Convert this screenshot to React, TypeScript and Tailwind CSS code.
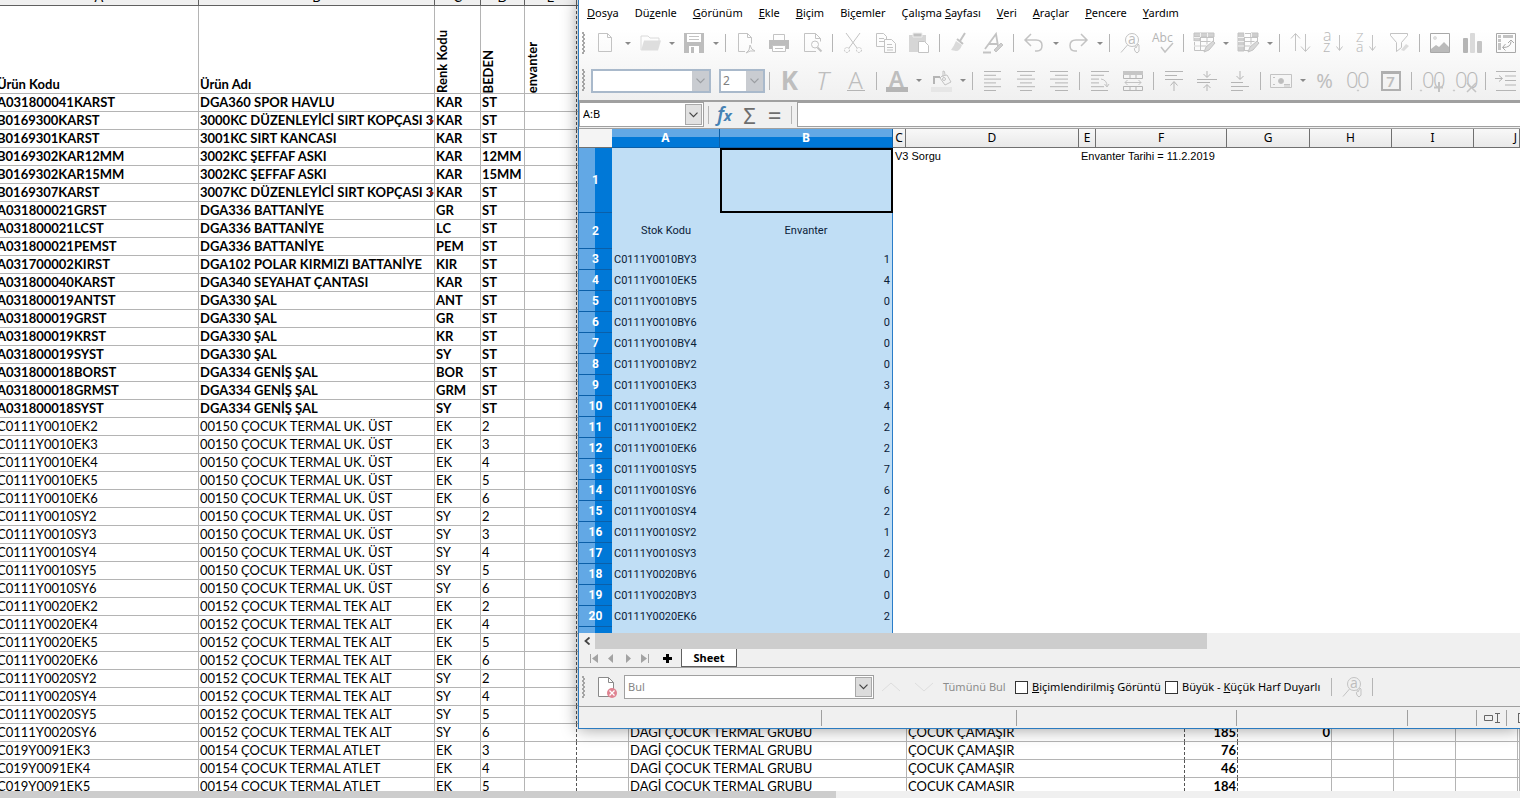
import React from 'react';
import type { ReactNode } from 'react';

type StockRow = [code: string, name: string, color: string, size: string];

const boldRows: StockRow[] = [
  ['A031800041KARST', 'DGA360 SPOR HAVLU', 'KAR', 'ST'],
  ['B0169300KARST', '3000KC DÜZENLEYİCİ SIRT KOPÇASI 3', 'KAR', 'ST'],
  ['B0169301KARST', '3001KC SIRT KANCASI', 'KAR', 'ST'],
  ['B0169302KAR12MM', '3002KC ŞEFFAF ASKI', 'KAR', '12MM'],
  ['B0169302KAR15MM', '3002KC ŞEFFAF ASKI', 'KAR', '15MM'],
  ['B0169307KARST', '3007KC DÜZENLEYİCİ SIRT KOPÇASI 3', 'KAR', 'ST'],
  ['A031800021GRST', 'DGA336 BATTANİYE', 'GR', 'ST'],
  ['A031800021LCST', 'DGA336 BATTANİYE', 'LC', 'ST'],
  ['A031800021PEMST', 'DGA336 BATTANİYE', 'PEM', 'ST'],
  ['A031700002KIRST', 'DGA102 POLAR KIRMIZI BATTANİYE', 'KIR', 'ST'],
  ['A031800040KARST', 'DGA340 SEYAHAT ÇANTASI', 'KAR', 'ST'],
  ['A031800019ANTST', 'DGA330 ŞAL', 'ANT', 'ST'],
  ['A031800019GRST', 'DGA330 ŞAL', 'GR', 'ST'],
  ['A031800019KRST', 'DGA330 ŞAL', 'KR', 'ST'],
  ['A031800019SYST', 'DGA330 ŞAL', 'SY', 'ST'],
  ['A031800018BORST', 'DGA334 GENİŞ ŞAL', 'BOR', 'ST'],
  ['A031800018GRMST', 'DGA334 GENİŞ ŞAL', 'GRM', 'ST'],
  ['A031800018SYST', 'DGA334 GENİŞ ŞAL', 'SY', 'ST'],
];

const normalRows: StockRow[] = [
  ['C0111Y0010EK2', '00150 ÇOCUK TERMAL UK. ÜST', 'EK', '2'],
  ['C0111Y0010EK3', '00150 ÇOCUK TERMAL UK. ÜST', 'EK', '3'],
  ['C0111Y0010EK4', '00150 ÇOCUK TERMAL UK. ÜST', 'EK', '4'],
  ['C0111Y0010EK5', '00150 ÇOCUK TERMAL UK. ÜST', 'EK', '5'],
  ['C0111Y0010EK6', '00150 ÇOCUK TERMAL UK. ÜST', 'EK', '6'],
  ['C0111Y0010SY2', '00150 ÇOCUK TERMAL UK. ÜST', 'SY', '2'],
  ['C0111Y0010SY3', '00150 ÇOCUK TERMAL UK. ÜST', 'SY', '3'],
  ['C0111Y0010SY4', '00150 ÇOCUK TERMAL UK. ÜST', 'SY', '4'],
  ['C0111Y0010SY5', '00150 ÇOCUK TERMAL UK. ÜST', 'SY', '5'],
  ['C0111Y0010SY6', '00150 ÇOCUK TERMAL UK. ÜST', 'SY', '6'],
  ['C0111Y0020EK2', '00152 ÇOCUK TERMAL TEK ALT', 'EK', '2'],
  ['C0111Y0020EK4', '00152 ÇOCUK TERMAL TEK ALT', 'EK', '4'],
  ['C0111Y0020EK5', '00152 ÇOCUK TERMAL TEK ALT', 'EK', '5'],
  ['C0111Y0020EK6', '00152 ÇOCUK TERMAL TEK ALT', 'EK', '6'],
  ['C0111Y0020SY2', '00152 ÇOCUK TERMAL TEK ALT', 'SY', '2'],
  ['C0111Y0020SY4', '00152 ÇOCUK TERMAL TEK ALT', 'SY', '4'],
  ['C0111Y0020SY5', '00152 ÇOCUK TERMAL TEK ALT', 'SY', '5'],
  ['C0111Y0020SY6', '00152 ÇOCUK TERMAL TEK ALT', 'SY', '6'],
  ['C019Y0091EK3', '00154 ÇOCUK TERMAL ATLET', 'EK', '3'],
  ['C019Y0091EK4', '00154 ÇOCUK TERMAL ATLET', 'EK', '4'],
  ['C019Y0091EK5', '00154 ÇOCUK TERMAL ATLET', 'EK', '5'],
];

// group, type, amount, total — only for the rows below the Calc window
const extras: Record<string, string[]> = {
  C0111Y0020SY6: ['DAGİ ÇOCUK TERMAL GRUBU', 'ÇOCUK ÇAMAŞIR', '185', '0'],
  C019Y0091EK3: ['DAGİ ÇOCUK TERMAL GRUBU', 'ÇOCUK ÇAMAŞIR', '76', ''],
  C019Y0091EK4: ['DAGİ ÇOCUK TERMAL GRUBU', 'ÇOCUK ÇAMAŞIR', '46', ''],
  C019Y0091EK5: ['DAGİ ÇOCUK TERMAL GRUBU', 'ÇOCUK ÇAMAŞIR', '184', ''],
};

const calcRows: [string, string][] = [
  ['C0111Y0010BY3', '1'],
  ['C0111Y0010EK5', '4'],
  ['C0111Y0010BY5', '0'],
  ['C0111Y0010BY6', '0'],
  ['C0111Y0010BY4', '0'],
  ['C0111Y0010BY2', '0'],
  ['C0111Y0010EK3', '3'],
  ['C0111Y0010EK4', '4'],
  ['C0111Y0010EK2', '2'],
  ['C0111Y0010EK6', '2'],
  ['C0111Y0010SY5', '7'],
  ['C0111Y0010SY6', '6'],
  ['C0111Y0010SY4', '2'],
  ['C0111Y0010SY2', '1'],
  ['C0111Y0010SY3', '2'],
  ['C0111Y0020BY6', '0'],
  ['C0111Y0020BY3', '0'],
  ['C0111Y0020EK6', '2'],
];

/* ---------- background sheet ---------- */

const cell = 'h-[18px] border-b border-r border-[#b4b4b4] p-0 pl-px leading-[17px] whitespace-nowrap';
const dashed = 'h-[18px] border-b border-r border-b-[#b4b4b4] border-r-[#555] [border-right-style:dashed] p-0 leading-[17px] whitespace-nowrap';

const SheetRow = ({ row, bold }: { row: StockRow; bold?: boolean }) => {
  const [group, type, amount, total] = extras[row[0]] ?? ['', '', '', ''];
  const cut = row[1].includes('KOPÇASI');

  return (
    <tr className={bold ? 'font-bold' : ''}>
      <td className={`${cell} -indent-1`}>{row[0]}</td>
      <td className={`${cell} relative`}>
        {row[1]}
        {cut && (
          <svg className="absolute top-[5px] right-0 h-2 w-1" viewBox="0 0 4 8">
            <path d="M0 1v6l4-3z" fill="#8b1a1a" />
          </svg>
        )}
      </td>
      <td className={cell}>{row[2]}</td>
      <td className={cell}>{row[3]}</td>
      <td className={dashed} />
      <td className={cell} />
      <td className={cell}>{group}</td>
      <td className={`${dashed} pl-px`}>{type}</td>
      <td className={`${dashed} pr-px text-right font-bold`}>{amount}</td>
      <td className={`${cell} pr-px text-right font-bold`}>{total}</td>
      <td className={cell} />
      <td className={cell} />
      <td className={cell} />
      <td className={cell} />
    </tr>
  );
};

const headCell = 'h-[88px] border-b border-r border-[#b4b4b4] p-0 pl-px text-left align-bottom font-bold leading-[17px]';

const Vertical = ({ children }: { children: ReactNode }) => (
  <span className="block w-[13px] rotate-180 leading-[13px] whitespace-nowrap [writing-mode:vertical-rl]">{children}</span>
);

const BackSheet = () => (
  <div className="flex h-full flex-col bg-white font-[Lato,sans-serif] text-[13px] text-black">
    <div className="min-h-0 flex-1 overflow-hidden">
      <table className="w-full table-fixed border-separate border-spacing-0">
        <colgroup>
          <col className="w-[199px]" />
          <col className="w-[236px]" />
          <col className="w-[46px]" />
          <col className="w-[44px]" />
          <col className="w-[52px]" />
          <col className="w-[52px]" />
          <col className="w-[278px]" />
          <col className="w-[278px]" />
          <col className="w-[53px]" />
          <col className="w-[94px]" />
          <col className="w-[62px]" />
          <col className="w-[62px]" />
          <col className="w-[62px]" />
          <col />
        </colgroup>
        <thead>
          <tr>
            {['A', 'B', 'C', 'D', 'E', '', '', '', '', '', '', '', '', ''].map((letter, i) => (
              <th key={i} scope="col" className="border-b border-r border-[#606060] bg-[#f0f0f0] p-0 font-normal">
                <div className="flex h-[5px] items-end justify-center overflow-hidden leading-4">{letter}</div>
              </th>
            ))}
          </tr>
          <tr>
            <th scope="col" className={`${headCell} -indent-1`}>Ürün Kodu</th>
            <th scope="col" className={headCell}>Ürün Adı</th>
            <th scope="col" className={headCell}><Vertical>Renk Kodu</Vertical></th>
            <th scope="col" className={headCell}><Vertical>BEDEN</Vertical></th>
            <th scope="col" className={`${headCell} border-r-[#555] [border-right-style:dashed]`}><Vertical>envanter</Vertical></th>
            <td colSpan={9} className="border-b border-[#b4b4b4] p-0" />
          </tr>
        </thead>
        <tbody>
          {boldRows.map((row) => <SheetRow key={row[0]} row={row} bold />)}
          {normalRows.map((row) => <SheetRow key={row[0]} row={row} />)}
        </tbody>
      </table>
    </div>
    <div className="h-[7px] shrink-0 bg-[#f0f0f0]">
      <div className="h-full w-[55%] bg-[#cdcdcd]" />
    </div>
  </div>
);

/* ---------- toolbar pieces ---------- */

const Tool = ({ label, children }: { label: string; children: ReactNode }) => (
  <button type="button" aria-label={label} className="flex h-7 w-[33px] shrink-0 items-center justify-center">
    <svg className="h-[22px] w-[22px] overflow-visible" viewBox="0 0 22 22" fill="none" stroke="#c3c3c3">
      {children}
    </svg>
  </button>
);

const Caret = () => (
  <button type="button" aria-label="Seçenekler" className="flex h-7 w-[11px] shrink-0 items-center justify-center">
    <svg className="h-[3px] w-[6px]" viewBox="0 0 6 3">
      <path d="M0 0h6L3 3z" fill="#8a8a8a" />
    </svg>
  </button>
);

const Sep = () => (
  <span className="flex h-[18px] w-2 shrink-0 justify-center">
    <span className="w-px bg-[#b5b5b5]" />
  </span>
);

const Grip = () => (
  <svg className="h-[23px] w-[3px] shrink-0" viewBox="0 0 3 23">
    <path d="M0 1h2M1 3h2M0 5h2M1 7h2M0 9h2M1 11h2M0 13h2M1 15h2M0 17h2M1 19h2M0 21h2" stroke="#8c8c8c" strokeWidth="1.300" />
  </svg>
);

const Chevron = () => (
  <svg className="h-[6px] w-[9px]" viewBox="0 0 9 6" fill="none" stroke="currentColor">
    <path d="M.5.7l4 4 4-4" strokeWidth="1.2" />
  </svg>
);

const FileShape = () => <path d="M3.500 1.500h9l4 4v14h-13zM12.500 1.500v4h4" />;

const Lines = ({ rows }: { rows: [number, number][] }) => (
  <path d={rows.map(([x, w], i) => `M${x} ${1.5 + i * 3.8}h${w}`).join('')} stroke="#b5b5b5" />
);

const TableIcon = ({ cols }: { cols?: boolean }) => (
  <>
    <path d="M1.500 1.500h19v9M1.500 1.500v17h10M1.500 5.500h19M1.500 9.500h16M1.500 14h12M7.500 1.500v17M14 1.500v11" />
    {cols ? <path d="M1 1h6v18H1zM14 1h7v4h-7z" fill="#cecece" /> : <path d="M1 1h20v4H1zM1 5h6v4H1z" fill="#d2d2d2" />}
    <path d="M1 9.500h6M1 14h6M1 5.500h6M14.500 1v4M7.500 1v4" stroke="#f2f2f2" />
    <path d="M11 20l2-5 7-6 2 2-6 7z" fill="#d8d8d8" />
  </>
);

const Glyph = ({ x, y, size, children }: { x: number; y: number; size: number; children: ReactNode }) => (
  <text x={x} y={y} fontSize={size} fill="#b8b8b8" stroke="none" fontFamily="Open Sans" fontWeight="300">{children}</text>
);

const FindIcon = () => (
  <>
    <circle cx="13" cy="8" r="6.500" />
    <text x="9" y="12" fontSize="14" fill="#bdbdbd" stroke="none" fontFamily="Open Sans">a</text>
    <path d="M8.500 13L2 20.500M16 14q0 2 1 2l2-4 1 1v6q-2 3.500-4 0-1.500-3 0-3" />
  </>
);

const StandardBar = () => (
  <div role="toolbar" aria-label="Standart" className="flex h-9 items-center pl-[3px]">
    <Grip />
    <span className="w-1 shrink-0" />
    <Tool label="Yeni"><FileShape /></Tool>
    <Caret />
    <Tool label="Aç">
      <path d="M2 18V4h7l2 2h9v3" stroke="#dadada" />
      <path d="M2 18.500l3-10h17l-3 10z" fill="#dedede" stroke="none" />
    </Tool>
    <Caret />
    <Tool label="Kaydet">
      <path d="M1 1h20v20H1z" fill="#bdbdbd" stroke="none" />
      <path d="M4 2h14v8H4zM6 14h10v7H6z" fill="#fff" stroke="none" />
      <path d="M6 4.500h10M6 7.500h10" />
      <path d="M8 15h3v6H8z" fill="#bdbdbd" stroke="none" />
    </Tool>
    <Caret />
    <Sep />
    <Tool label="PDF olarak aktar">
      <path d="M10 19.500H3.500v-18h9l4 4v6M12.500 1.500v4h4" />
      <path d="M11 21q4-2 4-8 1 5 5 6-5-1-9 2z" />
    </Tool>
    <Tool label="Yazdır">
      <path d="M5.500 8V2.500h11V8" />
      <path d="M1 8h20v9h-3v-3H4v3H1z" fill="#bdbdbd" stroke="none" />
      <path d="M4.500 13.500h13v6h-13z" fill="#fff" />
      <path d="M7 16.500h8" />
    </Tool>
    <Tool label="Baskı önizleme">
      <path d="M15 19.500H3.500v-18h11l5 5v3M14.500 1.500v5h5" />
      <circle cx="14" cy="12.500" r="3.500" />
      <path d="M16.500 15.500l4 4" strokeWidth="2" />
    </Tool>
    <Sep />
    <Tool label="Kes">
      <path d="M4 1l11 15M18 1L7 16" />
      <circle cx="5" cy="18" r="2.500" strokeDasharray="2 1" />
      <circle cx="17" cy="18" r="2.500" strokeDasharray="2 1" />
    </Tool>
    <Tool label="Kopyala">
      <path d="M9 14.500H1.500v-13h7l3 3v3M9.500 7.500h7l4 4v9h-11zM4 6.500h5M4 9.500h5M12 12.500h5M12 15.500h6M12 18h6" />
    </Tool>
    <Tool label="Yapıştır">
      <path d="M1 3h17v17H1z" fill="#d6d6d6" stroke="none" />
      <path d="M5 1h9v4H5z" fill="#c2c2c2" stroke="#eee" />
      <path d="M10.500 9.500h6l4 4v7h-10z" fill="#fff" />
    </Tool>
    <Sep />
    <Tool label="Biçimlendirmeyi kopyala">
      <path d="M16 1l-5 8M8 7l6 5" strokeWidth="2" />
      <path d="M7 9l6 4q-2 6-6 6l-5-1q3-4 5-9z" fill="#dadada" stroke="none" />
    </Tool>
    <Tool label="Biçimlendirmeyi temizle">
      <path d="M1 20.500h8M3 17L14 2l2 12M7 12h8" strokeWidth="1.800" />
      <path d="M12 18l7-7 2 2-7 7z" fill="#cecece" />
    </Tool>
    <Sep />
    <Tool label="Geri al"><path d="M8 2L2 8l6 6M2 8h11q6 0 6 5.500T14 19h-2" strokeWidth="1.500" /></Tool>
    <Caret />
    <Tool label="Yinele"><path d="M14 2l6 6-6 6M20 8H9q-6 0-6 5.500T8 19h2" strokeWidth="1.500" /></Tool>
    <Caret />
    <Sep />
    <Tool label="Bul ve değiştir"><FindIcon /></Tool>
    <Tool label="Yazım denetimi">
      <text x="0" y="10" fontSize="12" fill="#b5b5b5" stroke="none" fontFamily="Open Sans">Abc</text>
      <path d="M9 15l4 5 8-9" strokeWidth="1.500" />
    </Tool>
    <Sep />
    <Tool label="Satır"><TableIcon /></Tool>
    <Caret />
    <Tool label="Sütun"><TableIcon cols /></Tool>
    <Caret />
    <Sep />
    <Tool label="Sırala"><path d="M6.500 19V2M2 6.500l4.500-5 4.500 5M16.500 2v17M12 14.500l4.500 5 4.500-5" /></Tool>
    <Tool label="Artan sırala">
      <Glyph x={1} y={9} size={16}>a</Glyph>
      <Glyph x={1} y={20} size={16}>z</Glyph>
      <path d="M17.500 3v15M14.500 14.500l3 4 3-4" />
    </Tool>
    <Tool label="Azalan sırala">
      <Glyph x={1} y={10} size={13}>Z</Glyph>
      <Glyph x={1} y={20} size={14}>a</Glyph>
      <path d="M17.500 3v15M14.500 14.500l3 4 3-4" />
    </Tool>
    <Tool label="Otomatik süzgeç">
      <path d="M2.500 1.500h17v2l-6 7v5l-5 4v-9l-6-7z" />
      <path d="M13 18l5-6 3 2-5 5z" fill="#dcdcdc" stroke="none" />
    </Tool>
    <Sep />
    <Tool label="Resim">
      <path d="M1.500 1.500h19v19h-19z" stroke="#a8a8a8" />
      <circle cx="6" cy="6" r="1.500" fill="#dedede" stroke="#dedede" />
      <path d="M2 20v-3l5-4 3 2 5-5 5 5v5z" fill="#bababa" stroke="none" />
    </Tool>
    <Tool label="Grafik">
      <rect x="1" y="6" width="5" height="15" rx="1" fill="#b5b5b5" stroke="none" />
      <rect x="8" y="1" width="5" height="20" rx="1" fill="#dadada" stroke="none" />
      <rect x="15" y="9" width="5" height="12" rx="1" fill="#c4c4c4" stroke="none" />
    </Tool>
    <Tool label="Özet tablo">
      <path d="M1.500 1.500h19v19h-19z" stroke="#a8a8a8" />
      <path d="M3 4.500h3M8 4.500h10M4.500 7v3M4.500 11v7" strokeWidth="3" />
      <path d="M8 15.500q8 0 8-6M13 11l3-3 3 3M10.500 12l-3 3.500 3 3" stroke="#a8a8a8" />
    </Tool>
  </div>
);

const letter = 'flex h-7 w-[33px] shrink-0 items-center justify-center text-[#bebebe]';

const FormatBar = () => (
  <div role="toolbar" aria-label="Biçimlendirme" className="flex h-[39px] items-center pl-[3px]">
    <Grip />
    <label className="relative ml-[6px] flex h-6 w-[120px] shrink-0 border-2 border-[#a9b9cb]">
      <select aria-label="Yazı tipi adı" disabled className="w-full appearance-none bg-white pl-1">
        <option></option>
      </select>
      <span className="pointer-events-none absolute inset-y-0 right-0 flex w-[17px] items-center justify-center bg-[#c9ccd1] text-[#9a9da1]"><Chevron /></span>
    </label>
    <label className="relative ml-2 flex h-6 w-[46px] shrink-0 border-2 border-[#a9b9cb]">
      <select aria-label="Yazı tipi boyutu" disabled className="w-full appearance-none bg-white pl-[2px] text-[12px] text-[#808080]">
        <option>2</option>
      </select>
      <span className="pointer-events-none absolute inset-y-0 right-0 flex w-[17px] items-center justify-center bg-[#c9ccd1] text-[#9a9da1]"><Chevron /></span>
    </label>
    <Sep />
    <button type="button" className={`${letter} text-[26px] font-bold`}>K</button>
    <button type="button" className={`${letter} text-[26px] font-light italic`}>T</button>
    <button type="button" className={letter}>
      <span className="flex h-[21px] w-[18px] items-center justify-center border-b border-[#b5b5b5] text-[24px] font-light">A</span>
    </button>
    <Sep />
    <button type="button" className={letter}>
      <span className="flex h-[22px] w-[22px] items-center justify-center border-b-[5px] border-[#b5b5b5] text-[22px] font-semibold leading-4">A</span>
    </button>
    <Caret />
    <Tool label="Vurgulama rengi">
      <path d="M1 17h21v5H1z" fill="#e6e6e6" stroke="none" />
      <path d="M4 14V7h6" stroke="#b5b5b5" strokeWidth="2" />
      <path d="M10 8l5 7 6-3-4-7-5 1zM13 7V1q2-1 2 4" />
      <circle cx="14" cy="9" r="1.500" />
    </Tool>
    <Caret />
    <Sep />
    <Tool label="Sola hizala"><Lines rows={[[2, 17], [2, 12], [2, 17], [2, 12], [2, 17], [2, 12]]} /></Tool>
    <Tool label="Ortala"><Lines rows={[[2, 18], [5, 12], [2, 18], [5, 12], [2, 18], [5, 12]]} /></Tool>
    <Tool label="Sağa hizala"><Lines rows={[[2, 18], [7, 13], [2, 18], [7, 13], [2, 18], [7, 13]]} /></Tool>
    <Sep />
    <Tool label="Metni kaydır">
      <Lines rows={[[2, 18], [2, 13], [2, 8], [2, 8], [2, 13], [2, 17]]} />
      <path d="M12 9q6 1 6 7M15.500 14l2.500 3 2-3" />
    </Tool>
    <Tool label="Hücreleri birleştir">
      <path d="M1 1h20v4H1z" fill="#c6c6c6" stroke="none" />
      <path d="M1.500 5v3.500h19V5M8 5v3M14 5v3M1.500 20.500v-4h19v4zM8 17v3M14 17v3" stroke="#b5b5b5" />
      <path d="M3 12.500h16M5.500 10L3 12.500 5.500 15M16.500 10l2.500 2.500-2.500 2.500" />
    </Tool>
    <Sep />
    <Tool label="Üste hizala"><path d="M2 1.500h18M2 5.500h12M2 9.500h18M11 21V12M7.500 15.500l3.500-4 3.500 4" stroke="#b5b5b5" /></Tool>
    <Tool label="Dikey ortala"><path d="M1 9.500h20M1 12.500h13M11 1v6M7.500 4l3.500 3.500L14.500 4M11 21v-6M7.500 18l3.500-3.500 3.500 3.500" stroke="#b5b5b5" /></Tool>
    <Tool label="Alta hizala"><path d="M2 12.500h12M2 16.500h18M2 20.500h12M11 1v8M7.500 6l3.500 3.500L14.500 6" stroke="#b5b5b5" /></Tool>
    <Sep />
    <Tool label="Para birimi">
      <path d="M.5 4.500h21v13H.5z" />
      <circle cx="11" cy="11" r="2.500" fill="#bdbdbd" />
      <path d="M3 7.500h2M3 14.500h2M14 14.500h6M14 16h6" />
    </Tool>
    <Caret />
    <button type="button" className={`${letter} text-[20px]`}>%</button>
    <Tool label="Sayı">
      <Glyph x={-1} y={18} size={22}>0</Glyph>
      <Glyph x={10} y={18} size={22}>0</Glyph>
      <circle cx="11" cy="20.500" r=".6" />
    </Tool>
    <button type="button" className={letter}>
      <span className="flex h-5 w-5 items-center justify-center border-2 border-t-[3px] border-[#b0b0b0] text-[15px] font-semibold">7</span>
    </button>
    <Sep />
    <Tool label="Ondalık basamak ekle">
      <circle cx="0" cy="20.500" r=".6" />
      <Glyph x={1} y={18} size={22}>0</Glyph>
      <Glyph x={12} y={18} size={22}>0</Glyph>
      <path d="M18 12v10M13 17.500h9" strokeWidth="2" />
    </Tool>
    <Tool label="Ondalık basamak sil">
      <circle cx="0" cy="20.500" r=".6" />
      <Glyph x={1} y={18} size={22}>0</Glyph>
      <Glyph x={12} y={18} size={22}>0</Glyph>
      <path d="M13 13l9 9M22 13l-9 9" strokeWidth="1.500" />
    </Tool>
    <Sep />
    <Tool label="Girintiyi artır">
      <path d="M1 1.500h20M10 6h11M10 10.500h11M10 15h11M1 20.500h20M0 8.500h7M4 5.500l3.500 3L4 11.500" stroke="#b5b5b5" />
    </Tool>
  </div>
);

const menus: [string, string, string][] = [
  ['', 'D', 'osya'],
  ['Dü', 'z', 'enle'],
  ['', 'G', 'örünüm'],
  ['', 'E', 'kle'],
  ['', 'B', 'içim'],
  ['Bi', 'ç', 'emler'],
  ['Çalışma ', 'S', 'ayfası'],
  ['', 'V', 'eri'],
  ['', 'A', 'raçlar'],
  ['', 'P', 'encere'],
  ['', 'Y', 'ardım'],
];

const FormulaBar = () => (
  <div className="flex h-[26px] shrink-0 items-stretch border-t border-[#a0a0a0] bg-[#f0f0f0]">
    <div className="flex w-[125px] shrink-0 border border-[#a0a0a0] bg-white p-px">
      <input aria-label="Ad kutusu" defaultValue="A:B" className="min-w-0 flex-1 bg-white pl-[2px] outline-none" />
      <button type="button" aria-label="Ad listesi" className="flex w-[17px] items-center justify-center border border-[#a8a8a8] bg-[#e1e1e1] text-[#444]"><Chevron /></button>
    </div>
    <div className="flex shrink-0 items-center">
      <Sep />
      <button type="button" className="flex w-[25px] items-baseline justify-center text-[19px] font-semibold italic leading-6 text-[#4682b4]">f<span className="text-[15px] font-bold">x</span></button>
      <button type="button" className="w-[25px] text-[22px] leading-6 text-[#6e6e6e]">Σ</button>
      <button type="button" className="w-[25px] text-[24px] leading-6 text-[#6e6e6e]">=</button>
      <Sep />
    </div>
    <input aria-label="Giriş satırı" className="ml-[2px] min-w-0 flex-1 border border-r-0 border-[#a0a0a0] bg-white outline-none" />
  </div>
);

const selHead = 'h-[19px] border-b border-r border-b-[#0b5fa8] border-r-[#0b5fa8] bg-linear-to-b from-[#62a8e5] from-45% to-[#0078d7] to-45% p-0 leading-[18px] font-bold text-white';
const colHead = 'h-[19px] border-b border-r border-[#707070] bg-linear-to-b from-[#f8f8f8] to-[#e9e9e9] p-0 leading-[18px] font-normal text-black';
const rowHead = 'border-b border-r-0 border-[#0b5fa8] bg-linear-to-r from-[#62a8e5] from-50% to-[#0078d7] to-50% p-0 font-bold text-white';
const selCell = 'bg-[#c0def5] p-0 text-[#0b2138]';

const CalcGrid = () => (
  <div className="min-h-0 flex-1 overflow-hidden bg-white">
    <table className="w-full table-fixed border-separate border-spacing-0 font-[Roboto,sans-serif] text-[11px]">
      <colgroup>
        <col className="w-[33px]" />
        <col className="w-[108px]" />
        <col className="w-[173px]" />
        <col className="w-[13px]" />
        <col className="w-[173px]" />
        <col className="w-[17px]" />
        <col className="w-[131px]" />
        <col className="w-[83px]" />
        <col className="w-[82px]" />
        <col className="w-[82px]" />
        <col />
      </colgroup>
      <thead>
        <tr className="font-['Noto_Sans',sans-serif] text-[12px]">
          <td className="border-b border-[#707070] bg-[#f4f4f4] p-0" />
          <th scope="col" className={selHead}>A</th>
          <th scope="col" className={selHead}>B</th>
          {['C', 'D', 'E', 'F', 'G', 'H', 'I'].map((name) => (
            <th key={name} scope="col" className={colHead}>{name}</th>
          ))}
          <th scope="col" className={`${colHead} pr-[2px] text-right`}>J</th>
        </tr>
      </thead>
      <tbody>
        <tr>
          <th scope="row" className={`${rowHead} h-[65px] text-[12px]`}>1</th>
          <td className={selCell} />
          <td className={`${selCell} border-2 border-black`} />
          <td colSpan={4} className="p-0 pl-[2px] align-top font-['Liberation_Sans',sans-serif] leading-4">
            <div className="flex">
              <span className="w-[186px] shrink-0 whitespace-nowrap">V3 Sorgu</span>
              <span className="whitespace-nowrap">Envanter Tarihi = 11.2.2019</span>
            </div>
          </td>
          <td colSpan={4} />
        </tr>
        <tr>
          <th scope="row" className={`${rowHead} h-9 text-[12px]`}>2</th>
          <td className={`${selCell} text-center`}>Stok Kodu</td>
          <td className={`${selCell} border-r border-[#2a7dc9] text-center`}>Envanter</td>
          <td colSpan={8} />
        </tr>
        {calcRows.map(([code, count], i) => (
          <tr key={code}>
            <th scope="row" className={`${rowHead} h-[21px] text-[12px] leading-5`}>{i + 3}</th>
            <td className={`${selCell} pl-[2px] leading-5`}>{code}</td>
            <td className={`${selCell} border-r border-[#2a7dc9] pr-[2px] text-right leading-5`}>{count}</td>
            <td colSpan={8} />
          </tr>
        ))}
        <tr>
          <th className={`${rowHead} h-[21px]`} />
          <td className={selCell} />
          <td className={`${selCell} border-r border-[#2a7dc9]`} />
          <td colSpan={8} />
        </tr>
      </tbody>
    </table>
  </div>
);

const navPaths: [string, string][] = [
  ['İlk sayfa', 'M1 0v9H0V0zM8 0v9L2 4.500z'],
  ['Önceki sayfa', 'M6 0v9L1 4.500z'],
  ['Sonraki sayfa', 'M2 0v9l5-4.500z'],
  ['Son sayfa', 'M0 0v9l6-4.500zM7 0h1v9H7z'],
];

const SheetTabs = () => (
  <div className="flex h-[19px] shrink-0 border-b border-[#a0a0a0] pl-[6px]">
    {navPaths.map(([label, d]) => (
      <button key={label} type="button" aria-label={label} className="flex w-[17px] items-center justify-center">
        <svg className="h-[9px] w-2" viewBox="0 0 8 9"><path d={d} fill="#a3a3a3" /></svg>
      </button>
    ))}
    <button type="button" aria-label="Sayfa ekle" className="ml-1 flex w-5 items-center justify-center">
      <svg className="h-[9px] w-[9px]" viewBox="0 0 9 9"><path d="M3 0h3v3h3v3H6v3H3V6H0V3h3z" /></svg>
    </button>
    <button type="button" className="ml-1 h-[18px] w-14 border border-t-0 border-[#606060] bg-white text-[11px] font-bold leading-4">Sheet</button>
  </div>
);

const checkbox = 'h-[13px] w-[13px] shrink-0 appearance-none border border-[#333] bg-white';

const FindBar = () => (
  <div className="flex h-[39px] shrink-0 items-center border-b border-[#a0a0a0] pl-[3px]">
    <Grip />
    <button type="button" aria-label="Bul çubuğunu kapat" className="ml-2 flex w-7 shrink-0 justify-center">
      <svg className="h-[22px] w-[22px]" viewBox="0 0 22 22" fill="none">
        <path d="M2.500 1.500h10l5 5v14h-15z" fill="#fff" stroke="#8a8a8a" />
        <path d="M12.500 1.500v5h5" stroke="#8a8a8a" />
        <circle cx="16" cy="17" r="5" fill="#df8391" />
        <path d="M13.500 14.500l5 5M18.500 14.500l-5 5" stroke="#fff" strokeWidth="1.300" />
      </svg>
    </button>
    <div className="ml-[3px] flex h-6 w-[250px] shrink-0 border border-[#a0a0a0] bg-white p-px">
      <input aria-label="Bul" placeholder="Bul" className="min-w-0 flex-1 pl-[2px] outline-none placeholder:text-[#858585]" />
      <button type="button" aria-label="Arama geçmişi" className="flex w-[17px] items-center justify-center border border-[#a8a8a8] bg-[#dcdcdc] text-[#444]"><Chevron /></button>
    </div>
    <Tool label="Öncekini bul"><path d="M2 15l9-8 9 8" stroke="#dedede" /></Tool>
    <Tool label="Sonrakini bul"><path d="M2 7l9 8 9-8" stroke="#dedede" /></Tool>
    <button type="button" className="ml-[3px] w-[64px] shrink-0 text-left whitespace-nowrap text-[#8c8c8c]">Tümünü Bul</button>
    <label className="ml-2 flex w-[150px] shrink-0 items-center gap-1 whitespace-nowrap">
      <input type="checkbox" className={checkbox} />
      <span><u>B</u>içimlendirilmiş Görüntü</span>
    </label>
    <label className="flex w-[162px] shrink-0 items-center gap-1 whitespace-nowrap">
      <input type="checkbox" className={checkbox} />
      <span>Büyük - <u>K</u>üçük Harf Duyarlı</span>
    </label>
    <Sep />
    <Tool label="Bul ve değiştir"><FindIcon /></Tool>
    <Sep />
  </div>
);

const StatusBar = () => (
  <div className="flex h-[21px] shrink-0 items-center overflow-hidden">
    <span className="h-4 w-[243px] shrink-0 border-r border-[#a0a0a0]" />
    <span className="h-4 w-[195px] shrink-0 border-r border-[#a0a0a0]" />
    <span className="h-4 w-[220px] shrink-0 border-r border-[#a0a0a0]" />
    <span className="h-4 w-[171px] shrink-0 border-r border-[#a0a0a0]" />
    <span className="h-4 w-[69px] shrink-0 border-r border-[#a0a0a0]" />
    <span className="flex h-4 w-[30px] shrink-0 items-center justify-center border-r border-[#a0a0a0]">
      <svg className="h-3 w-4" viewBox="0 0 16 12" fill="none" stroke="#666">
        <path d="M.5 3.500h8v5h-8zM11 1.500h5M13.500 1.500v9M11 10.500h5" />
      </svg>
    </span>
    <span className="ml-[11px] h-[10px] w-3 shrink-0 border border-[#666]" />
  </div>
);

const CalcWindow = () => (
  <div className="absolute top-0 right-0 bottom-[69px] left-[578px] flex flex-col overflow-hidden border-b border-l border-[#2b7bc0] bg-[#f0f0f0] font-['Noto_Sans',sans-serif] text-[11px] text-black shadow-[0_0_16px_rgba(0,0,0,0.4)]">
    <div className="shrink-0 overflow-hidden border-b border-[#a0a0a0] bg-linear-to-b from-white from-30% to-[#f0f0f0]">
      <nav className="flex h-[25px] items-center gap-4 pl-2 whitespace-nowrap">
        {menus.map(([before, key, after]) => (
          <button key={before + key + after} type="button" className="leading-4">{before}<u>{key}</u>{after}</button>
        ))}
      </nav>
      <StandardBar />
      <FormatBar />
    </div>
    <FormulaBar />
    <div className="h-[2px] shrink-0 border-b border-[#a0a0a0]" />
    <CalcGrid />
    <div className="flex h-4 shrink-0">
      <button type="button" aria-label="Sola kaydır" className="flex w-4 items-center justify-center">
        <svg className="h-2 w-[6px]" viewBox="0 0 6 8" fill="none" stroke="#444" strokeWidth="1.800"><path d="M5.500.5L1.500 4l4 3.500" /></svg>
      </button>
      <div className="h-full w-[65%] bg-[#cdcdcd]" />
    </div>
    <SheetTabs />
    <FindBar />
    <StatusBar />
  </div>
);

export default function App() {
  return (
    <main className="relative h-screen overflow-hidden">
      <BackSheet />
      <CalcWindow />
    </main>
  );
}
